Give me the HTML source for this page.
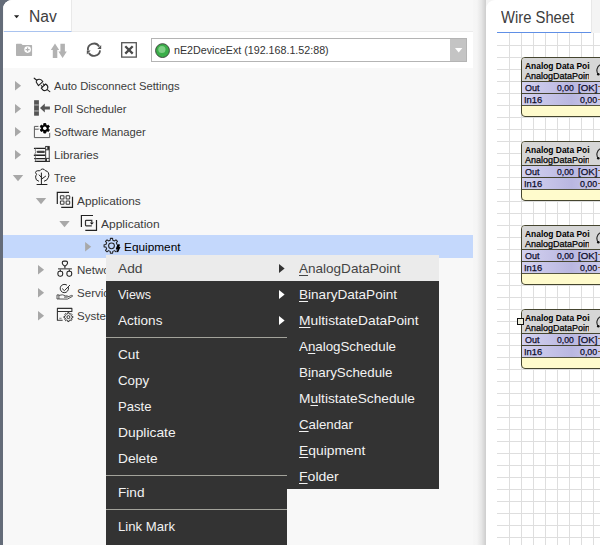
<!DOCTYPE html>
<html lang="en">
<head>
<meta charset="utf-8">
<title>Nav - Wire Sheet</title>
<style>
html,body{margin:0;padding:0;}
body{width:600px;height:545px;position:relative;overflow:hidden;background:#f4f4f4;font-family:"Liberation Sans",sans-serif;}
div,span,svg{position:absolute;box-sizing:border-box;}
.t{white-space:pre;line-height:20px;height:20px;transform-origin:0 50%;display:block;}
.t u{text-decoration:underline;text-decoration-thickness:1px;text-underline-offset:2px;}
.clip{left:0;top:0;height:545px;overflow:hidden;}
#strip{left:0;top:0;width:3px;height:545px;background:#646c79;}
#corner{left:0;top:0;width:20px;height:20px;background:#646c79;}
#nav{left:3px;top:0;width:470px;height:545px;background:#f8f8f8;border-top-left-radius:9px;overflow:hidden;}
#navhead{left:0;top:0;width:470px;height:32px;background:#f8f8f8;border-bottom:1px solid #ebebeb;}
#navtab{left:1px;top:0;width:68px;height:32px;background:#fff;border-bottom:1px solid #a9c3ef;border-right:1px solid #e9e9e9;}
#toolbar{left:0;top:32px;width:470px;height:36px;background:#fff;}
#combo{left:148px;top:6px;width:316px;height:24px;background:#fff;border:1px solid #b4b4b4;}
#combobtn{right:0;top:0;width:16px;height:22px;background:#c4c4c4;}
#sel{left:0;top:235px;width:470px;height:23px;background:#c4d8fc;}
#gap{left:473px;top:0;width:13px;height:545px;background:linear-gradient(90deg,#f6f6f6 0,#f5f5f5 30%,#e6e6e6 65%,#cdcdcd 100%);}
#ws{left:486px;top:0;width:114px;height:545px;background:#fff;border-top-left-radius:9px;overflow:hidden;}
#wshead{left:105px;top:0;width:9px;height:33px;background:#f4f4f4;border-left:1px solid #e8e8e8;}
#wsline{left:11px;top:32px;width:94px;height:1px;background:#5f8fe6;}
#gridv{left:12px;top:33px;width:102px;height:512px;background-image:linear-gradient(90deg,#dedede 1px,transparent 1px);background-size:12px 12px;background-position:-1px 0;}
#gridh{left:11px;top:34px;width:103px;height:511px;background-image:linear-gradient(#dedede 1px,transparent 1px);background-size:12px 12px;background-position:0 -1px;}
.blk{left:35px;width:90px;height:60px;border:1px solid #45452f;border-radius:4px;overflow:hidden;background:#fffbcc;}
.blk .h{left:0;top:0;width:90px;height:24px;background:#d6d6d6;border-bottom:1px solid #45452f;}
.blk .r1{left:0;top:24px;width:90px;height:12px;background:linear-gradient(90deg,#d4d2f0,#b9b7e0 55%,#d4d2f0);border-bottom:1px solid #45452f;}
.blk .r2{left:0;top:36px;width:90px;height:12px;background:linear-gradient(90deg,#d4d2f0,#b9b7e0 55%,#d4d2f0);border-bottom:1px solid #55553f;}
#menu{left:106px;top:255px;width:181px;height:300px;background:#333;}
#sub{left:287px;top:255px;width:152px;height:234px;background:#333;}
.hl{left:0;top:0;width:100%;height:26px;background:#ebebeb;}
.sep{left:0;width:181px;height:1px;background:#a3a39b;}
.arr{width:0;height:0;border-style:solid;border-color:transparent;}
</style>
</head>
<body>
<div id="strip"></div><div id="corner"></div>
<div id="nav">
  <div id="navhead"></div>
  <div id="navtab"></div>
  <svg style="left:11px;top:15px" width="6" height="4" viewBox="0 0 6 4"><path d="M0 0.2H5.2L2.6 3.2Z" fill="#222"/></svg>
  <div id="toolbar">
    <div id="combo"><div id="combobtn"><svg style="left:5px;top:9px" width="8" height="5" viewBox="0 0 8 5"><path d="M0 0H7.4L3.7 4.4Z" fill="#fff"/></svg></div>
      <svg style="left:3px;top:4px" width="16" height="16" viewBox="0 0 16 16"><circle cx="7.5" cy="7.6" r="6.9" fill="#3aae49" stroke="#3f4a3f" stroke-width="1"/><circle cx="6.9" cy="6.5" r="3.6" fill="#7fcf86"/></svg>
    </div>
  </div>
  <div id="sel"></div>
</div>
<svg style="left:0;top:0" width="600" height="545" viewBox="0 0 600 545"><path d="M16 44.6Q16 43.8 16.8 43.8H21.2L22.6 45.1H31.4Q32.1 45.1 32.1 45.8V55.3Q32.1 56 31.4 56H16.8Q16 56 16 55.3Z" fill="#b2b2b2"/>
<circle cx="27.6" cy="49.6" r="3.3" fill="#fff"/><path d="M25.6 49.6H29.6M27.6 47.6V51.6" stroke="#b2b2b2" stroke-width="1.1"/>
<path d="M55 43.6L59.2 50H57.3V57.9H52.8V50H50.8Z" fill="#b2b2b2"/>
<path d="M62.6 57.9L58.4 51.6H60.4V43.7H64.9V51.6H66.8Z" fill="#b2b2b2"/>
<path d="M87.93 50.34A6.1 6.1 0 0 1 99.17 46.47" fill="none" stroke="#565656" stroke-width="1.8"/>
<path d="M101.2 44.9V48.9H97.3Z" fill="#565656"/>
<path d="M100.07 50.34A6.1 6.1 0 0 1 88.83 52.93" fill="none" stroke="#565656" stroke-width="1.8"/>
<path d="M86.8 54.5V50.5H90.7Z" fill="#565656"/>
<rect x="121.7" y="42.7" width="14.6" height="14.4" fill="#fff" stroke="#565656" stroke-width="1.3"/>
<path d="M125.3 46.2L132.7 53.6M132.7 46.2L125.3 53.6" stroke="#4a4a4a" stroke-width="2.3"/>
<path d="M15.0 81.0L21.1 85.8L15.0 90.6Z" fill="#a8a8a8"/>
<path d="M15.0 104.0L21.1 108.8L15.0 113.6Z" fill="#a8a8a8"/>
<path d="M15.0 127.00000000000001L21.1 131.8L15.0 136.60000000000002Z" fill="#a8a8a8"/>
<path d="M15.0 150.0L21.1 154.8L15.0 159.60000000000002Z" fill="#a8a8a8"/>
<path d="M12.8 174.9H23.2L18 181.3Z" fill="#a8a8a8"/>
<path d="M35.8 197.9H46.2L41 204.3Z" fill="#a8a8a8"/>
<path d="M59.3 220.9H69.7L64.5 227.3Z" fill="#a8a8a8"/>
<path d="M85.10000000000001 242.0L91.2 246.8L85.10000000000001 251.60000000000002Z" fill="#a8a8a8"/>
<path d="M38.0 265.0L44.099999999999994 269.8L38.0 274.6Z" fill="#a8a8a8"/>
<path d="M38.0 288.0L44.099999999999994 292.8L38.0 297.6Z" fill="#a8a8a8"/>
<path d="M38.0 311.0L44.099999999999994 315.8L38.0 320.6Z" fill="#a8a8a8"/>
<g fill="none" stroke="#222" stroke-width="1.1" stroke-linecap="round" stroke-linejoin="round"><path d="M34.2 78.2L36.8 80.3"/><path d="M36.3 82.3Q35.9 79.5 39.3 79.2Q41.3 79.1 42.8 81.6L38.5 85.6Z"/><path d="M41.2 88.1L45.6 84Q48.5 85.8 47.7 88.4Q46.6 91.2 43.5 90.5Z"/><path d="M42.6 86.8L41.3 85.6M44.5 85.1L43.2 83.9"/><path d="M47.2 89.6L49.8 91.6"/></g>
<rect x="34.1" y="100.2" width="4.8" height="15.5" fill="#555"/><rect x="34.1" y="104" width="4.8" height="1.9" fill="#8c8c8c"/><rect x="34.1" y="110" width="4.8" height="1.9" fill="#8c8c8c"/>
<path d="M40 107.9L44.8 103.4V106.4H49.9V109.4H44.8V112.4Z" fill="#555"/>
<path d="M40 126.4H34.4V137.6H49.7V132.6M34.4 129.2H40.5" fill="none" stroke="#5a5a5a" stroke-width="1"/>
<path d="M46.30 132.65 L46.09 134.16 L43.51 134.16 L43.30 132.65 L41.78 131.77 L40.37 132.34 L39.08 130.12 L40.28 129.18 L40.28 127.42 L39.08 126.48 L40.37 124.26 L41.78 124.83 L43.30 123.95 L43.51 122.44 L46.09 122.44 L46.30 123.95 L47.82 124.83 L49.23 124.26 L50.52 126.48 L49.32 127.42 L49.32 129.18 L50.52 130.12 L49.23 132.34 L47.82 131.77Z" fill="#fff" stroke="#fff" stroke-width="1.5" stroke-linejoin="round"/>
<path d="M45.94 131.61 L45.85 133.09 L43.75 133.09 L43.66 131.61 L42.50 130.94 L41.18 131.60 L40.13 129.78 L41.36 128.97 L41.36 127.63 L40.13 126.82 L41.18 125.00 L42.50 125.66 L43.66 124.99 L43.75 123.51 L45.85 123.51 L45.94 124.99 L47.10 125.66 L48.42 125.00 L49.47 126.82 L48.24 127.63 L48.24 128.97 L49.47 129.78 L48.42 131.60 L47.10 130.94Z" fill="#000" stroke="#000" stroke-width="0.8" stroke-linejoin="round"/><circle cx="44.8" cy="128.3" r="1.8" fill="#fff"/>
<g fill="none" stroke="#222" stroke-linecap="round"><path d="M34.4 148.4H44.8" stroke-width="1.1"/><path d="M37.8 151.9H43.8" stroke-width="2.2" stroke="#444"/><path d="M34.4 155.3H44.8" stroke-width="1.4"/><path d="M34.6 158.6H44.8" stroke-width="1.2"/><path d="M35.2 161.3H49.4" stroke-width="1.2"/><path d="M35.8 148.4Q34.4 150 35.8 151.8Q34.4 153.6 35.8 155.3Q34.6 157 35.8 158.6Q34.8 160 35.8 161.3" stroke-width="0.8" stroke="#666"/><rect x="45.7" y="146.4" width="3.5" height="14.9" stroke-width="0.9" fill="#fff"/><path d="M45.7 149.8H49.2M45.7 158.4H49.2" stroke-width="0.9" stroke-linecap="butt"/></g><rect x="47.3" y="146.9" width="1.9" height="2.6" fill="#222"/><rect x="45.7" y="158.6" width="1.2" height="2.6" fill="#222"/>
<g fill="none" stroke="#222" stroke-width="1" stroke-linecap="round" stroke-linejoin="round"><path d="M38.6 181.2Q35.4 180.4 35.6 177.2Q35.6 175.6 36.6 174.4Q34.6 172.4 36.2 171.2Q37.6 170.4 39.8 170.8Q41 169 42.6 169Q44.4 169 45.2 170.6Q47.6 171 48.4 172.8Q49.4 175.2 48.4 177.4Q47.6 180.4 44.4 181.2"/><path d="M41.4 173V184.5M37 184.5H47M39.2 175L41.4 177.4M45.6 176.2L41.4 179.2"/></g>
<g fill="none" stroke="#222" stroke-width="1.2"><path d="M69 192.4H57.3V204"/><path d="M72.5 196.8V207.3H61.2"/></g>
<rect x="60.4" y="195.65" width="3.6" height="3.3" rx="0.7" fill="#fff" stroke="#3c3c3c" stroke-width="1.05"/>
<rect x="60.4" y="200.95" width="3.6" height="3.3" rx="0.7" fill="#fff" stroke="#3c3c3c" stroke-width="1.05"/>
<rect x="66.1" y="195.65" width="3.6" height="3.3" rx="0.7" fill="#fff" stroke="#3c3c3c" stroke-width="1.05"/>
<rect x="66.1" y="200.95" width="3.6" height="3.3" rx="0.7" fill="#fff" stroke="#3c3c3c" stroke-width="1.05"/>
<g fill="none" stroke="#222" stroke-width="1.2"><path d="M93 215.5H81.4V227"/><path d="M96.5 220V230.4H85.3"/><path d="M91.8 225.8H86.2Q85.5 225.8 85.5 225.1V221Q85.5 220.3 86.2 220.3H91.8V222.6" stroke="#333"/></g><path d="M89.8 222.4H93.8L91.8 224.8Z" fill="#111"/>
<path d="M117.06 244.52 L118.92 244.70 L118.92 246.90 L117.06 247.08 L116.33 248.83 L117.52 250.27 L115.97 251.82 L114.53 250.63 L112.78 251.36 L112.60 253.22 L110.40 253.22 L110.22 251.36 L108.47 250.63 L107.03 251.82 L105.48 250.27 L106.67 248.83 L105.94 247.08 L104.08 246.90 L104.08 244.70 L105.94 244.52 L106.67 242.77 L105.48 241.33 L107.03 239.78 L108.47 240.97 L110.22 240.24 L110.40 238.38 L112.60 238.38 L112.78 240.24 L114.53 240.97 L115.97 239.78 L117.52 241.33 L116.33 242.77Z" fill="none" stroke="#222" stroke-width="1.05" stroke-linejoin="round"/><circle cx="111.5" cy="245.8" r="2.9" fill="none" stroke="#222" stroke-width="1.05"/>
<path d="M117.3 244.4H120L119.1 247.1H120.5L118.1 252.3L116.9 252.1L117.5 249.3H115.9Z" fill="#000" stroke="#c4d8fc" stroke-width="0.5" paint-order="stroke"/>
<path d="M58 268.8H71.9" stroke="#707070" stroke-width="1.5"/><g fill="none" stroke="#222" stroke-width="1.1" stroke-linejoin="round"><path d="M62.3 262.6Q62.3 261.1 63.8 261.1H66Q67.5 261.1 67.5 262.6V263.3Q67.4 265 64.9 266.2Q62.4 265 62.3 263.3Z"/><rect x="57.9" y="271.2" width="4.8" height="5" rx="1.9"/><rect x="66.9" y="271.2" width="4.8" height="5" rx="1.9"/><path d="M64.9 266.2V268.2M60.3 269.4V271.2M69.3 269.4V271.2"/></g>
<g fill="none" stroke="#2e2e2e" stroke-width="1" stroke-linecap="round" stroke-linejoin="round"><path d="M68.5 287.6A4.2 4.2 0 1 1 66.6 284.9"/><path d="M62.4 288.8L64.4 290.7L69.7 285.3"/></g><g fill="none" stroke="#3a3a3a" stroke-width="0.85" stroke-linecap="round" stroke-linejoin="round"><path d="M57.4 294.9H58.9V299H57.4Z"/><path d="M59.4 295.3L62.4 294.8Q64 295.2 65.2 295.9H67.6Q68.5 296.4 67.6 297.1H64.4"/><path d="M68.2 296.8L71.6 295.4Q72.9 295.3 72.4 296.4L67.4 299.1L59.4 299"/></g>
<g fill="none" stroke="#333" stroke-width="1.1" stroke-linejoin="round"><path d="M62.6 320.3H57.4V308.4H71.9V311.5H57.4"/></g><path d="M59.3 318.3H61.6" stroke="#888" stroke-width="1.1"/>
<path d="M71.71 316.34 L72.85 316.44 L72.85 317.76 L71.71 317.86 L71.28 318.90 L72.01 319.78 L71.08 320.71 L70.20 319.98 L69.16 320.41 L69.06 321.55 L67.74 321.55 L67.64 320.41 L66.60 319.98 L65.72 320.71 L64.79 319.78 L65.52 318.90 L65.09 317.86 L63.95 317.76 L63.95 316.44 L65.09 316.34 L65.52 315.30 L64.79 314.42 L65.72 313.49 L66.60 314.22 L67.64 313.79 L67.74 312.65 L69.06 312.65 L69.16 313.79 L70.20 314.22 L71.08 313.49 L72.01 314.42 L71.28 315.30Z" fill="none" stroke="#333" stroke-width="1" stroke-linejoin="round"/><circle cx="68.4" cy="317.1" r="1.5" fill="none" stroke="#333" stroke-width="1"/></svg>
<div id="gap"></div>
<div id="ws">
  <div id="wshead"></div>
  <div id="gridv"></div><div id="gridh"></div>
  <div id="wsline"></div>
  <div class="blk" style="top:57px"><div class="h"></div><div class="r1"></div><div class="r2"></div><svg style="left:68px;top:2px" width="22" height="20" viewBox="0 0 22 20"><path d="M11.2 4.4A6.4 6.4 0 0 0 8.6 14.8" fill="none" stroke="#222" stroke-width="1.1"/><circle cx="8.3" cy="14.2" r="1.3" fill="#111"/></svg><div style="left:76px;top:28px;width:3px;height:1px;background:#9a6424"></div><div style="left:76px;top:41px;width:3px;height:1px;background:#9a6424"></div></div>
<div class="blk" style="top:141px"><div class="h"></div><div class="r1"></div><div class="r2"></div><svg style="left:68px;top:2px" width="22" height="20" viewBox="0 0 22 20"><path d="M11.2 4.4A6.4 6.4 0 0 0 8.6 14.8" fill="none" stroke="#222" stroke-width="1.1"/><circle cx="8.3" cy="14.2" r="1.3" fill="#111"/></svg><div style="left:76px;top:28px;width:3px;height:1px;background:#9a6424"></div><div style="left:76px;top:41px;width:3px;height:1px;background:#9a6424"></div></div>
<div class="blk" style="top:225px"><div class="h"></div><div class="r1"></div><div class="r2"></div><svg style="left:68px;top:2px" width="22" height="20" viewBox="0 0 22 20"><path d="M11.2 4.4A6.4 6.4 0 0 0 8.6 14.8" fill="none" stroke="#222" stroke-width="1.1"/><circle cx="8.3" cy="14.2" r="1.3" fill="#111"/></svg><div style="left:76px;top:28px;width:3px;height:1px;background:#9a6424"></div><div style="left:76px;top:41px;width:3px;height:1px;background:#9a6424"></div></div>
<div class="blk" style="top:309px"><div class="h"></div><div class="r1"></div><div class="r2"></div><svg style="left:68px;top:2px" width="22" height="20" viewBox="0 0 22 20"><path d="M11.2 4.4A6.4 6.4 0 0 0 8.6 14.8" fill="none" stroke="#222" stroke-width="1.1"/><circle cx="8.3" cy="14.2" r="1.3" fill="#111"/></svg><div style="left:76px;top:28px;width:3px;height:1px;background:#9a6424"></div><div style="left:76px;top:41px;width:3px;height:1px;background:#9a6424"></div></div>
<div style="left:31px;top:318px;width:7px;height:7px;background:#eeeedc;border:1px solid #111"></div>
</div>
<span class="t" style="left:29.12px;top:6.69px;font-size:15.6px;color:#3d3d3d;transform:scaleX(1.0037);">Nav</span>
<span class="t" style="left:500.93px;top:7.69px;font-size:15.6px;color:#3d3d3d;transform:scaleX(0.9486);">Wire Sheet</span>
<span class="t" style="left:173.99px;top:39.89px;font-size:11px;color:#333;transform:scaleX(0.9728);">nE2DeviceExt (192.168.1.52:88)</span>
<span class="t" style="left:54.38px;top:75.59px;font-size:11px;color:#3c3c3c;transform:scaleX(1.0213);">Auto Disconnect Settings</span>
<span class="t" style="left:53.98px;top:98.59px;font-size:11px;color:#3c3c3c;transform:scaleX(1.0236);">Poll Scheduler</span>
<span class="t" style="left:54.49px;top:121.59px;font-size:11px;color:#3c3c3c;transform:scaleX(1.0201);">Software Manager</span>
<span class="t" style="left:53.95px;top:144.59px;font-size:11px;color:#3c3c3c;transform:scaleX(1.0541);">Libraries</span>
<span class="t" style="left:54.16px;top:167.59px;font-size:11px;color:#3c3c3c;transform:scaleX(0.9775);">Tree</span>
<span class="t" style="left:77.48px;top:190.59px;font-size:11px;color:#3c3c3c;transform:scaleX(1.0745);">Applications</span>
<span class="t" style="left:101.08px;top:213.59px;font-size:11px;color:#3c3c3c;transform:scaleX(1.0906);">Application</span>
<span class="t" style="left:123.53px;top:236.59px;font-size:11px;color:#000;transform:scaleX(1.0754);">Equipment</span>
<span class="t" style="left:76.75px;top:259.59px;font-size:11px;color:#3c3c3c;transform:scaleX(1.0500);">Network</span>
<span class="t" style="left:77.18px;top:282.59px;font-size:11px;color:#3c3c3c;transform:scaleX(1.0500);">Services</span>
<span class="t" style="left:77.18px;top:305.59px;font-size:11px;color:#3c3c3c;transform:scaleX(1.0500);">System</span>
<div class="clip" style="width:589.6px"><span class="t" style="left:524.79px;top:56.08px;font-size:9.3px;color:#000;transform:scaleX(0.9047);font-weight:700;">Analog Data Point</span></div>
<div class="clip" style="width:589.2px"><span class="t" style="left:524.98px;top:65.88px;font-size:9.3px;color:#000;transform:scaleX(0.9693);-webkit-text-stroke:0.25px;">AnalogDataPoint</span></div>
<span class="t" style="left:524.57px;top:77.88px;font-size:9.3px;color:#0c0c2a;transform:scaleX(0.9661);-webkit-text-stroke:0.25px;">Out</span>
<span class="t" style="left:556.86px;top:77.88px;font-size:9.3px;color:#0c0c2a;transform:scaleX(0.9262);-webkit-text-stroke:0.25px;">0,00</span>
<span class="t" style="left:578.01px;top:77.88px;font-size:9.3px;color:#0c0c2a;transform:scaleX(1.0415);-webkit-text-stroke:0.25px;">[OK]</span>
<span class="t" style="left:524.13px;top:89.88px;font-size:9.3px;color:#0c0c2a;transform:scaleX(1.0094);-webkit-text-stroke:0.25px;">In16</span>
<span class="t" style="left:579.86px;top:89.88px;font-size:9.3px;color:#0c0c2a;transform:scaleX(0.9492);-webkit-text-stroke:0.25px;">0,00</span>
<div class="clip" style="width:589.6px"><span class="t" style="left:524.79px;top:140.08px;font-size:9.3px;color:#000;transform:scaleX(0.9047);font-weight:700;">Analog Data Point</span></div>
<div class="clip" style="width:589.2px"><span class="t" style="left:524.98px;top:149.88px;font-size:9.3px;color:#000;transform:scaleX(0.9693);-webkit-text-stroke:0.25px;">AnalogDataPoint</span></div>
<span class="t" style="left:524.57px;top:161.88px;font-size:9.3px;color:#0c0c2a;transform:scaleX(0.9661);-webkit-text-stroke:0.25px;">Out</span>
<span class="t" style="left:556.86px;top:161.88px;font-size:9.3px;color:#0c0c2a;transform:scaleX(0.9262);-webkit-text-stroke:0.25px;">0,00</span>
<span class="t" style="left:578.01px;top:161.88px;font-size:9.3px;color:#0c0c2a;transform:scaleX(1.0415);-webkit-text-stroke:0.25px;">[OK]</span>
<span class="t" style="left:524.13px;top:173.88px;font-size:9.3px;color:#0c0c2a;transform:scaleX(1.0094);-webkit-text-stroke:0.25px;">In16</span>
<span class="t" style="left:579.86px;top:173.88px;font-size:9.3px;color:#0c0c2a;transform:scaleX(0.9492);-webkit-text-stroke:0.25px;">0,00</span>
<div class="clip" style="width:589.6px"><span class="t" style="left:524.79px;top:224.08px;font-size:9.3px;color:#000;transform:scaleX(0.9047);font-weight:700;">Analog Data Point</span></div>
<div class="clip" style="width:589.2px"><span class="t" style="left:524.98px;top:233.88px;font-size:9.3px;color:#000;transform:scaleX(0.9693);-webkit-text-stroke:0.25px;">AnalogDataPoint</span></div>
<span class="t" style="left:524.57px;top:245.88px;font-size:9.3px;color:#0c0c2a;transform:scaleX(0.9661);-webkit-text-stroke:0.25px;">Out</span>
<span class="t" style="left:556.86px;top:245.88px;font-size:9.3px;color:#0c0c2a;transform:scaleX(0.9262);-webkit-text-stroke:0.25px;">0,00</span>
<span class="t" style="left:578.01px;top:245.88px;font-size:9.3px;color:#0c0c2a;transform:scaleX(1.0415);-webkit-text-stroke:0.25px;">[OK]</span>
<span class="t" style="left:524.13px;top:257.88px;font-size:9.3px;color:#0c0c2a;transform:scaleX(1.0094);-webkit-text-stroke:0.25px;">In16</span>
<span class="t" style="left:579.86px;top:257.88px;font-size:9.3px;color:#0c0c2a;transform:scaleX(0.9492);-webkit-text-stroke:0.25px;">0,00</span>
<div class="clip" style="width:589.6px"><span class="t" style="left:524.79px;top:308.08px;font-size:9.3px;color:#000;transform:scaleX(0.9047);font-weight:700;">Analog Data Point</span></div>
<div class="clip" style="width:589.2px"><span class="t" style="left:524.98px;top:317.88px;font-size:9.3px;color:#000;transform:scaleX(0.9693);-webkit-text-stroke:0.25px;">AnalogDataPoint</span></div>
<span class="t" style="left:524.57px;top:329.88px;font-size:9.3px;color:#0c0c2a;transform:scaleX(0.9661);-webkit-text-stroke:0.25px;">Out</span>
<span class="t" style="left:556.86px;top:329.88px;font-size:9.3px;color:#0c0c2a;transform:scaleX(0.9262);-webkit-text-stroke:0.25px;">0,00</span>
<span class="t" style="left:578.01px;top:329.88px;font-size:9.3px;color:#0c0c2a;transform:scaleX(1.0415);-webkit-text-stroke:0.25px;">[OK]</span>
<span class="t" style="left:524.13px;top:341.88px;font-size:9.3px;color:#0c0c2a;transform:scaleX(1.0094);-webkit-text-stroke:0.25px;">In16</span>
<span class="t" style="left:579.86px;top:341.88px;font-size:9.3px;color:#0c0c2a;transform:scaleX(0.9492);-webkit-text-stroke:0.25px;">0,00</span>
<div id="menu">
  <div class="hl"></div>
  <div class="sep" style="top:82px"></div>
  <div class="sep" style="top:220px"></div>
  <div class="sep" style="top:254px"></div>
  <svg style="left:173px;top:9px" width="6" height="9" viewBox="0 0 6 9"><path d="M0 0L5.6 4.5L0 9Z" fill="#333"/></svg>
  <svg style="left:173px;top:35px" width="6" height="9" viewBox="0 0 6 9"><path d="M0 0L5.6 4.5L0 9Z" fill="#fff"/></svg>
  <svg style="left:173px;top:61px" width="6" height="9" viewBox="0 0 6 9"><path d="M0 0L5.6 4.5L0 9Z" fill="#fff"/></svg>
</div>
<div id="sub"><div class="hl"></div></div>
<span class="t" style="left:118.07px;top:258.59px;font-size:13.3px;color:#444;transform:scaleX(1.0356);">Add</span>
<span class="t" style="left:118.05px;top:284.59px;font-size:13.3px;color:#f2f2f2;transform:scaleX(0.9396);">Views</span>
<span class="t" style="left:118.07px;top:310.59px;font-size:13.3px;color:#f2f2f2;transform:scaleX(1.0185);">Actions</span>
<span class="t" style="left:117.91px;top:344.59px;font-size:13.3px;color:#f2f2f2;transform:scaleX(1.0236);">Cut</span>
<span class="t" style="left:117.92px;top:370.59px;font-size:13.3px;color:#f2f2f2;transform:scaleX(1.0018);">Copy</span>
<span class="t" style="left:117.72px;top:396.59px;font-size:13.3px;color:#f2f2f2;transform:scaleX(0.9866);">Paste</span>
<span class="t" style="left:117.67px;top:422.59px;font-size:13.3px;color:#f2f2f2;transform:scaleX(1.0399);">Duplicate</span>
<span class="t" style="left:117.68px;top:448.59px;font-size:13.3px;color:#f2f2f2;transform:scaleX(1.0311);">Delete</span>
<span class="t" style="left:117.68px;top:482.59px;font-size:13.3px;color:#f2f2f2;transform:scaleX(1.0240);">Find</span>
<span class="t" style="left:117.72px;top:516.59px;font-size:13.3px;color:#f2f2f2;transform:scaleX(0.9882);">Link Mark</span>
<span class="t" style="left:299.27px;top:258.59px;font-size:13.3px;color:#444;transform:scaleX(1.0172);"><u>A</u>nalogDataPoint</span>
<span class="t" style="left:298.79px;top:284.59px;font-size:13.3px;color:#f2f2f2;transform:scaleX(1.0200);"><u>B</u>inaryDataPoint</span>
<span class="t" style="left:298.77px;top:310.59px;font-size:13.3px;color:#f2f2f2;transform:scaleX(1.0375);"><u>M</u>ultistateDataPoint</span>
<span class="t" style="left:299.27px;top:336.59px;font-size:13.3px;color:#f2f2f2;transform:scaleX(1.0015);">A<u>n</u>alogSchedule</span>
<span class="t" style="left:298.81px;top:362.59px;font-size:13.3px;color:#f2f2f2;transform:scaleX(1.0034);">B<u>i</u>narySchedule</span>
<span class="t" style="left:298.78px;top:388.59px;font-size:13.3px;color:#f2f2f2;transform:scaleX(1.0308);">M<u>u</u>ltistateSchedule</span>
<span class="t" style="left:299.03px;top:414.59px;font-size:13.3px;color:#f2f2f2;transform:scaleX(0.9986);"><u>C</u>alendar</span>
<span class="t" style="left:298.76px;top:440.59px;font-size:13.3px;color:#f2f2f2;transform:scaleX(1.0434);"><u>E</u>quipment</span>
<span class="t" style="left:298.75px;top:466.59px;font-size:13.3px;color:#f2f2f2;transform:scaleX(1.0552);"><u>F</u>older</span>
</body>
</html>
